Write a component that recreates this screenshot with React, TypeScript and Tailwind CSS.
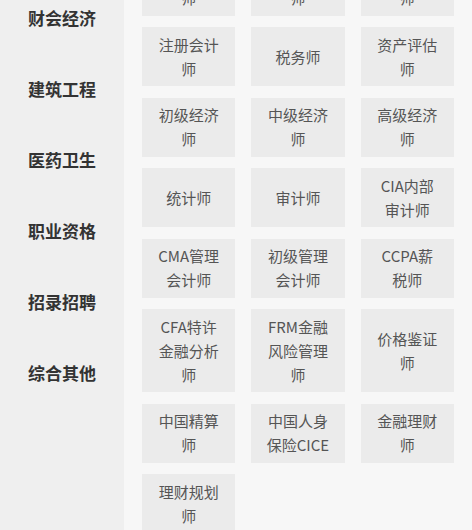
import React from 'react';

const categories = ['财会经济', '建筑工程', '医药卫生', '职业资格', '招录招聘', '综合其他'];

const exams = [
  ['初级会计', '师'],
  ['中级会计', '师'],
  ['高级会计', '师'],
  ['注册会计', '师'],
  ['税务师'],
  ['资产评估', '师'],
  ['初级经济', '师'],
  ['中级经济', '师'],
  ['高级经济', '师'],
  ['统计师'],
  ['审计师'],
  ['CIA内部', '审计师'],
  ['CMA管理', '会计师'],
  ['初级管理', '会计师'],
  ['CCPA薪', '税师'],
  ['CFA特许', '金融分析', '师'],
  ['FRM金融', '风险管理', '师'],
  ['价格鉴证', '师'],
  ['中国精算', '师'],
  ['中国人身', '保险CICE'],
  ['金融理财', '师'],
  ['理财规划', '师'],
];

export default function App() {
  return (
    <div
      className="flex h-[530px] w-[472px] overflow-hidden bg-[#f7f7f7]"
      style={{ fontFamily: '"Noto Sans CJK SC", "Noto Sans", sans-serif' }}
    >
      {/* 左侧分类 */}
      <div className="w-[124px] shrink-0 bg-[#efefef]">
        <div className="mt-[-17.5px] flex flex-col">
          {categories.map((c) => (
            <div
              key={c}
              className="flex h-[71px] items-center pl-[28px] text-[17px] font-bold text-[#333333]"
            >
              {c}
            </div>
          ))}
        </div>
      </div>

      {/* 右侧考试列表 */}
      <div className="flex-1 px-[18px]">
        <div className="mt-[-43.5px] grid grid-cols-3 gap-x-[16px] gap-y-[11.5px]">
          {exams.map((lines, i) => (
            <div
              key={i}
              className="flex min-h-[59px] flex-col items-center justify-center bg-[#ebebeb] py-[5.5px] text-center text-[15px] leading-[24px] text-[#555555]"
            >
              {lines.map((l, j) => (
                <span key={j}>{l}</span>
              ))}
            </div>
          ))}
        </div>
      </div>
    </div>
  );
}
